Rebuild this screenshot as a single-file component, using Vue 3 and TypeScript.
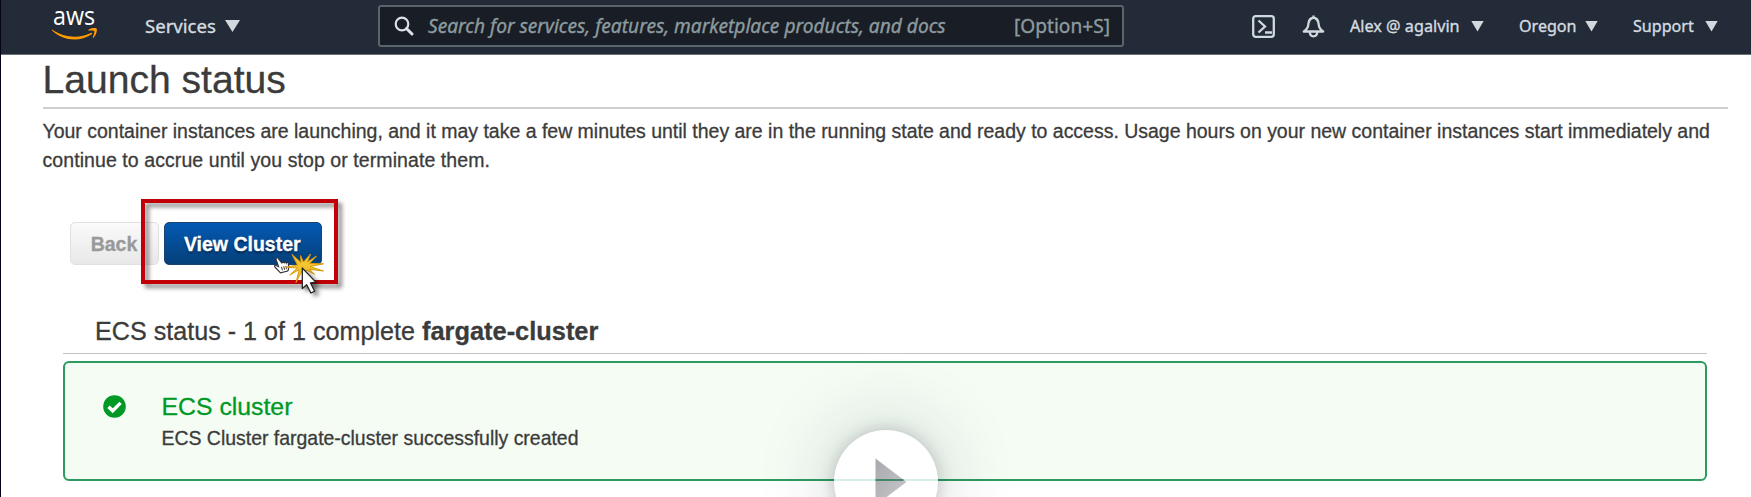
<script setup lang="ts">
interface Menu {
  label: string
  kind: string
}

const menus: Menu[] = [
  { label: 'Alex @ agalvin', kind: 'account' },
  { label: 'Oregon', kind: 'region' },
  { label: 'Support', kind: 'support' },
]
</script>

<template>
  <div class="page">
    <header class="topbar">
      <svg class="logo" viewBox="0 0 46 32" width="46" height="32">
        <text class="logo-text" x="1" y="15" textLength="42" lengthAdjust="spacingAndGlyphs">aws</text>
        <path d="M.5 19.700c12 8.400 27 8.800 38.500 3.200.9-.5 1.700.6.8 1.300C28 32 11 31.200 .3 20.700c-.7-.7-.4-1.400.2-1Z" fill="#f90" />
        <path d="M36.200 20c2.200-2 6.800-2.400 8.300-1.500 1.100 1.100-.1 6.600-3 9.200-.5.4-.9.200-.7-.300.800-2 2-5.400 1.400-6.300-.700-.900-3.500-.700-5.500-.500-.600.100-.800-.300-.500-.600Z" fill="#f90" />
      </svg>
      <div class="menu services"><span>Services</span><i class="caret big"></i></div>
      <div class="search">
        <svg class="lens" viewBox="0 0 20 20" width="20" height="20">
          <circle cx="8" cy="8" r="6.300" fill="none" stroke="#dce1e4" stroke-width="2.200" />
          <path d="M12.500 12.500l5.500 5.500" stroke="#dce1e4" stroke-width="3" stroke-linecap="round" />
        </svg>
        <span class="hint">Search for services, features, marketplace products, and docs</span>
        <span class="shortcut">[Option+S]</span>
      </div>
      <svg class="shell" viewBox="0 0 23 23" width="23" height="23" fill="none" stroke="#d0d9de" stroke-width="2.300">
        <rect x="1.200" y="1.200" width="20.600" height="20.600" rx="2.500" />
        <path d="M6.500 5.500l6.500 6-6.500 6M13 17.500h7" />
      </svg>
      <svg class="bell" viewBox="0 0 23 23" width="23" height="23" fill="none" stroke="#d0d9de" stroke-width="2.300" stroke-linejoin="round">
        <path d="M11.500 2.500C8 3.200 6.500 6 6.300 9.500 6.100 12.500 5 14.300 1.800 16.500h19.400c-3.200-2.200-4.300-4-4.500-7C16.500 6 15 3.200 11.500 2.500ZM11.500.500v2" />
        <path d="M7.800 16.800c0 6 7.400 6 7.400 0" />
      </svg>
      <div v-for="m in menus" :key="m.kind" class="menu" :class="m.kind">
        <span>{{ m.label }}</span><i class="caret"></i>
      </div>
    </header>

    <main>
      <h1>Launch status</h1>
      <p class="intro">
        <span class="l1">Your container instances are launching, and it may take a few minutes until they are in the running state and ready to access. Usage hours on your new container instances start immediately and</span><br />
        <span class="l2">continue to accrue until you stop or terminate them.</span>
      </p>
      <div class="actions">
        <button class="btn back">Back</button>
        <button class="btn primary">View Cluster</button>
        <div class="highlight"></div>
        <svg class="pointer" viewBox="0 0 60 50" width="60" height="50">
          <path d="M5.500 6c-.9-2-2.900-1.500-2.300.7l2.400 7-2.400-1.300c-1.300-.7-2.200.6-1.300 1.600l5.600 5.800 7.200-1.700c1.400-2.400 1.500-4.400.6-7.800-.4-1.300-1.700-1.200-2-.3-.4-1.100-1.800-1.100-2.200-.2-.6-1-1.900-.9-2.300.2Z" fill="#fff" stroke="#30343a" stroke-width="1.100" />
          <path d="M8.500 13.800l.9 3.500M10.800 13.300l.8 3.500M13 12.900l.4 3.200" stroke="#333" stroke-width="1" />
          <path d="M19 1.500l9 8-.5-7 3 6.500L37.500 1l-3 8 9-6-7 7.500 14 .3-13.500 2.700 13.500 4.500-14-1.700 5 5-8-4.300-2.500 4-1.500-4-6.500 12.500 3.300-13-9.500 5.500 7.700-7-11.500-.8 11.500-2.200Z" fill="#f5c531" stroke="#d89a0b" stroke-width="1" stroke-linejoin="round" />
          <path class="arrow" d="M29.300 15v20.500l4.400-3.800 4.200 8.300 3.800-1.800-4.200-8.300 5.300-.8Z" fill="#fff" stroke="#252525" stroke-width="1.300" stroke-linejoin="round" />
        </svg>
      </div>

      <section>
        <h2><span class="st">ECS status - 1 of 1 complete </span><b>fargate-cluster</b></h2>
        <div class="notice">
          <svg class="check" viewBox="0 0 23 23" width="23" height="23">
            <circle cx="11.500" cy="11.500" r="11.300" fill="#009926" />
            <path d="M5.500 11.700l4.200 4.100 7.900-7.900" fill="none" stroke="#fff" stroke-width="3.400" />
          </svg>
          <div>
            <h3><span>ECS cluster</span></h3>
            <p><span>ECS Cluster fargate-cluster successfully created</span></p>
          </div>
        </div>
      </section>
    </main>

    <div class="play">
      <svg viewBox="0 0 104 104" width="104" height="104">
        <defs>
          <linearGradient id="tri" x1="0" y1="0" x2="1" y2="1">
            <stop offset="0" stop-color="#a9a9ad" />
            <stop offset="1" stop-color="#c9c9ce" />
          </linearGradient>
        </defs>
        <path d="M0 50h104" stroke="#c9eadb" stroke-width="1.500" />
        <path d="M41.500 28.500v47L72.500 52Z" fill="url(#tri)" />
        <path d="M41.500 49.200h28v1.600h-28Z" fill="#287d59" />
      </svg>
    </div>
  </div>
</template>

<style>
body {
  margin: 0;
}
</style>

<style scoped>
.page {
  position: relative;
  box-sizing: border-box;
  width: 1751px;
  height: 497px;
  overflow: hidden;
  background: #fff;
  border-left: 1px solid #05031a;
  color: #3b3b3b;
  font-family: "Liberation Sans", Arial, sans-serif;
  -webkit-text-stroke: 0.3px;
}
span,
b {
  white-space: nowrap;
}
.topbar {
  display: flex;
  align-items: center;
  box-sizing: border-box;
  height: 55px;
  padding-bottom: 2px;
  background: #222b37;
  border-bottom: 1px solid #69717b;
  color: #d5dce0;
  font-family: "Noto Sans", sans-serif;
  -webkit-text-stroke: 0.35px;
}
.logo {
  flex: none;
  margin: 0 47px 0 51px;
  overflow: visible;
}
.logo-text {
  font: 500 25px "Open Sans", sans-serif;
  fill: #fff;
}
.menu {
  display: flex;
  flex: none;
  align-items: center;
  justify-content: space-between;
  font-size: 16.1px;
}
.services {
  width: 95px;
  margin-right: 138px;
  font-size: 18.6px;
}
.services span {
  margin-top: -2px;
}
.caret {
  width: 13px;
  height: 11px;
  background: #d0d9de;
  clip-path: polygon(0 0, 100% 0, 50% 100%);
}
.caret.big {
  width: 15px;
  height: 12px;
}
.search {
  display: flex;
  flex: none;
  align-items: center;
  box-sizing: border-box;
  width: 746px;
  height: 42px;
  padding: 0 12px 0 14px;
  border: 2px solid #59646b;
  border-radius: 3px;
  background: #191d25;
  color: #8c9b9f;
  font-size: 19.15px;
}
.hint {
  margin-left: 14px;
  font-style: italic;
}
.shortcut {
  margin-left: auto;
}
.shell {
  flex: none;
  margin: 0 27px 0 128px;
}
.bell {
  flex: none;
  margin-right: 25px;
}
.account {
  width: 134px;
  margin-right: 35px;
}
.account span {
  font-size: 16.2px;
}
.region {
  width: 79px;
  margin-right: 35px;
}
.support {
  width: 85px;
}
main {
  padding: 0 23.5px 0 41.5px;
}
h1 {
  height: 52px;
  margin: 0;
  border-bottom: 2px solid #cfcfcf;
  font-size: 39.1px;
  font-weight: 400;
  line-height: 49px;
}
.intro {
  margin: 8px 0 0;
  font-size: 19.5px;
  line-height: 29px;
}
.l1 {
  letter-spacing: -0.012px;
}
.l2 {
  letter-spacing: 0.08px;
}
.actions {
  position: relative;
  display: flex;
  gap: 5px;
  margin: 47px 0 0 27.5px;
}
.btn {
  box-sizing: border-box;
  height: 43px;
  padding: 0;
  border-radius: 5px;
  font: bold 19.5px/40px "Liberation Sans", Arial, sans-serif;
}
.back {
  width: 89px;
  padding-right: 1px;
  border: 1px solid #e0e0e0;
  background: linear-gradient(#fafafa, #e8e8e8);
  color: #999;
}
.primary {
  width: 157.5px;
  padding-right: 1px;
  border: 1px solid #1c426e;
  background: linear-gradient(#0459b4, #054079);
  color: #fff;
  text-shadow: 0 2px 2px #042549;
}
.highlight {
  position: absolute;
  top: -23px;
  left: 71px;
  width: 189px;
  height: 77px;
  border: 4px solid #c00006;
  filter: drop-shadow(4px 4px 2px rgb(0 0 0 / 45%));
}
.pointer {
  position: absolute;
  top: 31px;
  left: 203px;
  overflow: visible;
}
.arrow {
  filter: drop-shadow(4px 3px 2px rgb(0 0 0 / 45%));
}
section {
  margin: 48px 21px 0 20.5px;
}
h2 {
  box-sizing: border-box;
  height: 41px;
  margin: 0 0 7px;
  padding-left: 32px;
  border-bottom: 1.5px solid #c4c4c4;
  font-size: 25.15px;
  font-weight: 400;
  line-height: 36px;
  white-space: pre;
}
h2 b {
  font-size: 25.4px;
}
.notice {
  display: flex;
  gap: 35.5px;
  box-sizing: border-box;
  height: 120px;
  padding: 32px 0 0 38px;
  border: 2px solid #2d9b60;
  border-radius: 6px;
  background: #f4fcf4;
}
h3 {
  margin: -2px 0 0;
  color: #009926;
  font-size: 24.8px;
  font-weight: 400;
  line-height: 28px;
}
.notice p {
  margin: 5px 0 0;
  font-size: 19.45px;
  line-height: 24px;
}
.play {
  position: absolute;
  top: 430px;
  left: 832.5px;
  width: 104px;
  height: 104px;
  border-radius: 50%;
  background: #fefffe;
  box-shadow: 0 0 16px rgb(20 20 45 / 20%), 0 0 80px rgb(30 40 50 / 22%);
}
</style>
